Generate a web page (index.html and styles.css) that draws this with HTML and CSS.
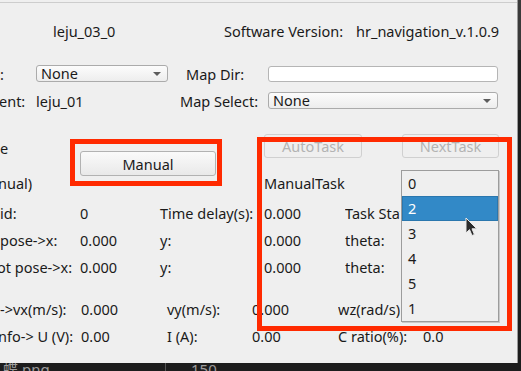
FILE: index.html
```html
<!DOCTYPE html>
<html lang="en">

<head>
    <meta charset="UTF-8">
    <meta name="viewport" content="width=device-width, initial-scale=1.0">
    <title>Navigation</title>
    <link rel="stylesheet" href="styles.css">
</head>

<body>
    <div class="screen">
        <div class="window">
            <div class="main">

                <div class="row-top">
                    <span>leju_03_0</span>
                    <span>Software Version:</span>
                    <span>hr_navigation_v.1.0.9</span>
                </div>

                <div class="row-form">
                    <span class="cut">:</span>
                    <div class="combo"><span>None</span><i class="arrow"></i></div>
                    <span class="map-dir">Map Dir:</span>
                    <div class="field"></div>
                </div>

                <div class="row-form row-map">
                    <span class="cut cut-e">ent:</span>
                    <span>leju_01</span>
                    <span class="map-select">Map Select:</span>
                    <div class="combo"><span>None</span><i class="arrow"></i></div>
                </div>

                <div class="mode">
                    <div class="mode-labels">
                        <span class="cut">e</span>
                        <span class="cut cut-n">nual)</span>
                    </div>
                    <button class="btn btn-manual">Manual</button>
                    <div class="task">
                        <div class="task-buttons">
                            <button class="btn btn-auto" disabled>AutoTask</button>
                            <button class="btn btn-next" disabled>NextTask</button>
                        </div>
                        <span class="task-label">ManualTask</span>
                    </div>
                </div>

                <div class="data">
                    <span>id:</span>
                    <span>0</span>
                    <span>Time delay(s):</span>
                    <span>0.000</span>
                    <span class="clip">Task State:</span>

                    <span>pose-&gt;x:</span>
                    <span>0.000</span>
                    <span>y:</span>
                    <span>0.000</span>
                    <span class="clip">theta:</span>

                    <span class="cut cut-o">ot pose-&gt;x:</span>
                    <span>0.000</span>
                    <span>y:</span>
                    <span>0.000</span>
                    <span class="clip">theta:</span>
                </div>

                <div class="data data-power">
                    <span>-&gt;vx(m/s):</span>
                    <span>0.000</span>
                    <span>vy(m/s):</span>
                    <span>0.000</span>
                    <span class="clip clip-wz">wz(rad/s):</span>
                    <span></span>

                    <span class="cut cut-n">nfo-&gt; U (V):</span>
                    <span>0.00</span>
                    <span>I (A):</span>
                    <span>0.00</span>
                    <span>C ratio(%):</span>
                    <span>0.0</span>
                </div>

            </div>
            <div class="side"></div>
        </div>

        <div class="taskbar">
            <span class="file">蝶.png</span>
            <span class="count">150</span>
        </div>

        <div class="mark mark-manual"></div>
        <div class="mark mark-task"></div>

        <ul class="popup">
            <li>0</li>
            <li class="current">2</li>
            <li>3</li>
            <li>4</li>
            <li>5</li>
            <li>1</li>
        </ul>

        <svg class="cursor" width="13" height="20" viewBox="0 0 13 20">
            <path d="M1 1 L1 16 L4.5 12.6 L7 18.5 L9.4 17.5 L7 11.8 L11.8 11.8 Z" fill="#2b2b2b" stroke="#e8e8e8" stroke-width="1" stroke-linejoin="round" />
        </svg>
    </div>
</body>

</html>
```

FILE: styles.css
```css
* {
    margin: 0;
    padding: 0;
    box-sizing: border-box;
}

body {
    width: 521px;
    height: 371px;
    overflow: hidden;
    background: #1d1d1d;
    font-family: "Noto Sans", sans-serif;
    font-size: 14.5px;
    color: #1a1a1a;
}

.screen {
    position: relative;
    width: 521px;
    height: 371px;
    display: flex;
    flex-direction: column;
}

.window {
    display: flex;
    height: 363px;
}

.main {
    width: 517px;
    background: #efefef;
    padding-top: 2px;
    overflow: hidden;
}

.side {
    width: 4px;
    border-left: 1px solid #9a9a9a;
    background: linear-gradient(#3a3a3a 0, #3a3a3a 50px, #1d1d1d 50px);
}

/* top rows */

.row-top {
    display: grid;
    grid-template-columns: 171px 132px auto;
    align-items: center;
    height: 57px;
    padding-left: 53px;
    border-top: 1px solid #cdcdcd;
    white-space: nowrap;
}

.row-form {
    display: grid;
    grid-template-columns: 36px 132px 100px 230px;
    align-items: center;
    height: 29px;
    white-space: nowrap;
}

.row-map {
    height: 25px;
}

.cut {
    white-space: nowrap;
}

.cut-e {
    margin-left: -1px;
}

.cut-n {
    margin-left: -2px;
}

.cut-o {
    margin-left: -3px;
}

.map-dir {
    padding-left: 18px;
}

.map-select {
    padding-left: 12px;
}

.combo {
    height: 17px;
    border: 1px solid #ababab;
    border-radius: 3px;
    background: linear-gradient(#fcfcfc, #ededed);
    display: flex;
    align-items: center;
    justify-content: space-between;
    padding: 0 6px 0 4px;
    line-height: 15px;
}

.arrow {
    border-left: 4px solid transparent;
    border-right: 4px solid transparent;
    border-top: 4px solid #5c5c5c;
}

.field {
    height: 16px;
    background: #fff;
    border: 1px solid #b5b5b5;
    border-radius: 3px;
}

/* mode + task */

.mode {
    display: flex;
    height: 86px;
}

.mode-labels {
    width: 80px;
    display: flex;
    flex-direction: column;
    padding-top: 25px;
    gap: 15px;
    line-height: 20px;
}

.btn {
    font: inherit;
    height: 24px;
    border: 1px solid #b2b2b2;
    border-radius: 3px;
    background: linear-gradient(#fafafa, #e9e9e9);
    color: #1a1a1a;
}

.btn:disabled {
    color: #b3b3b3;
    border-color: #d0d0d0;
    background: #efefef;
}

.btn-manual {
    margin-top: 38px;
    width: 136px;
    height: 25px;
}

.task {
    margin-left: 48px;
    display: flex;
    flex-direction: column;
}

.task-buttons {
    margin-top: 21px;
    display: flex;
    gap: 40px;
}

.btn-auto {
    width: 98px;
}

.btn-next {
    width: 97px;
}

.task-label {
    margin-top: 15px;
    line-height: 20px;
}

/* readouts */

.data {
    display: grid;
    grid-template-columns: 80px 80px 104px 81px 55px;
    grid-auto-rows: 27px;
    align-items: center;
    white-space: nowrap;
}

.data .clip {
    overflow: hidden;
}

.data-power {
    margin-top: 15px;
    grid-template-columns: 81px 86px 85px 86px 85px auto;
}

.data .clip-wz {
    max-width: 62px;
}

/* bottom strip */

.taskbar {
    height: 8px;
    overflow: hidden;
    display: flex;
    color: #9c9c9c;
    font-family: "Noto Sans", "Noto Sans CJK SC", sans-serif;
    font-size: 15px;
    line-height: 13px;
}

.file {
    width: 166px;
    padding-left: 3px;
    border-right: 1px solid #555;
}

.count {
    padding-left: 25px;
}

/* overlays */

.mark {
    position: absolute;
    border: 5px solid #ff2a00;
}

.mark-manual {
    left: 70px;
    top: 139px;
    width: 152px;
    height: 47px;
}

.mark-task {
    left: 257px;
    top: 137px;
    width: 255px;
    height: 194px;
}

.popup {
    position: absolute;
    left: 401px;
    top: 170px;
    width: 98px;
    height: 152px;
    list-style: none;
    background: #efefef;
    border: 1px solid #9c9c9c;
    box-shadow: 1px 1px 0 #c9c9c9;
}

.popup li {
    height: 25px;
    line-height: 25px;
    padding-left: 6px;
}

.popup .current {
    background: #3289c7;
    color: #fff;
    border: 1px solid #2a77ae;
    padding-left: 5px;
    line-height: 23px;
}

.cursor {
    position: absolute;
    left: 465px;
    top: 217px;
}
```
